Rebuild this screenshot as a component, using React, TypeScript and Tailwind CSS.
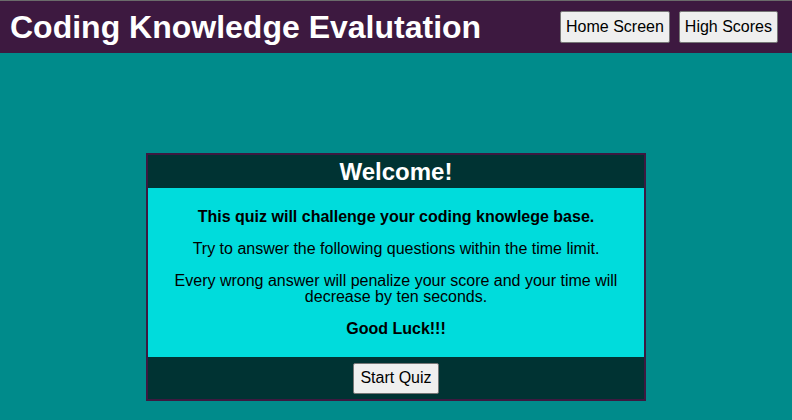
const NavButton = ({ label }: { label: string }) => (
  <button className="h-[32px] px-[5px] bg-[#efefef] border border-[#767676] rounded-[2px] text-[16px] text-black leading-[18px]">
    {label}
  </button>
);

const Header = () => (
  <header className="h-[53px] border-t border-[#6b6b6b] bg-[#3d1940] flex items-center justify-between pl-[10px] pr-[14px]">
    <h1 className="text-[32px] font-bold text-white leading-none">Coding Knowledge Evalutation</h1>
    <div className="flex items-center gap-[9px] mb-[1px]">
      <NavButton label="Home Screen" />
      <NavButton label="High Scores" />
    </div>
  </header>
);

const WelcomeCard = () => (
  <div className="w-[500px] mx-auto mt-[100px] border-2 border-[#3d1940] bg-[#003333]">
    <div className="h-[33px] flex items-center justify-center">
      <h2 className="text-[24px] font-bold text-white leading-none">Welcome!</h2>
    </div>
    <div className="bg-[#00dcdc] px-[20px] pt-[5px] pb-[4px] text-center text-[16px] text-black leading-[16px]">
      <p className="my-[16px] font-bold">This quiz will challenge your coding knowlege base.</p>
      <p className="my-[16px]">Try to answer the following questions within the time limit.</p>
      <p className="my-[16px]">
        Every wrong answer will penalize your score and your time will decrease by ten seconds.
      </p>
      <p className="my-[16px] font-bold">Good Luck!!!</p>
    </div>
    <div className="h-[42px] flex items-center justify-center">
      <button className="h-[31px] px-[6px] bg-[#efefef] border border-[#767676] rounded-[2px] text-[16px] text-black leading-[18px]">
        Start Quiz
      </button>
    </div>
  </div>
);

export default function App() {
  return (
    <div
      className="w-[792px] h-[420px] overflow-hidden bg-[#008b8b]"
      style={{ fontFamily: '"Liberation Sans", Arial, sans-serif' }}
    >
      <Header />
      <WelcomeCard />
    </div>
  );
}
